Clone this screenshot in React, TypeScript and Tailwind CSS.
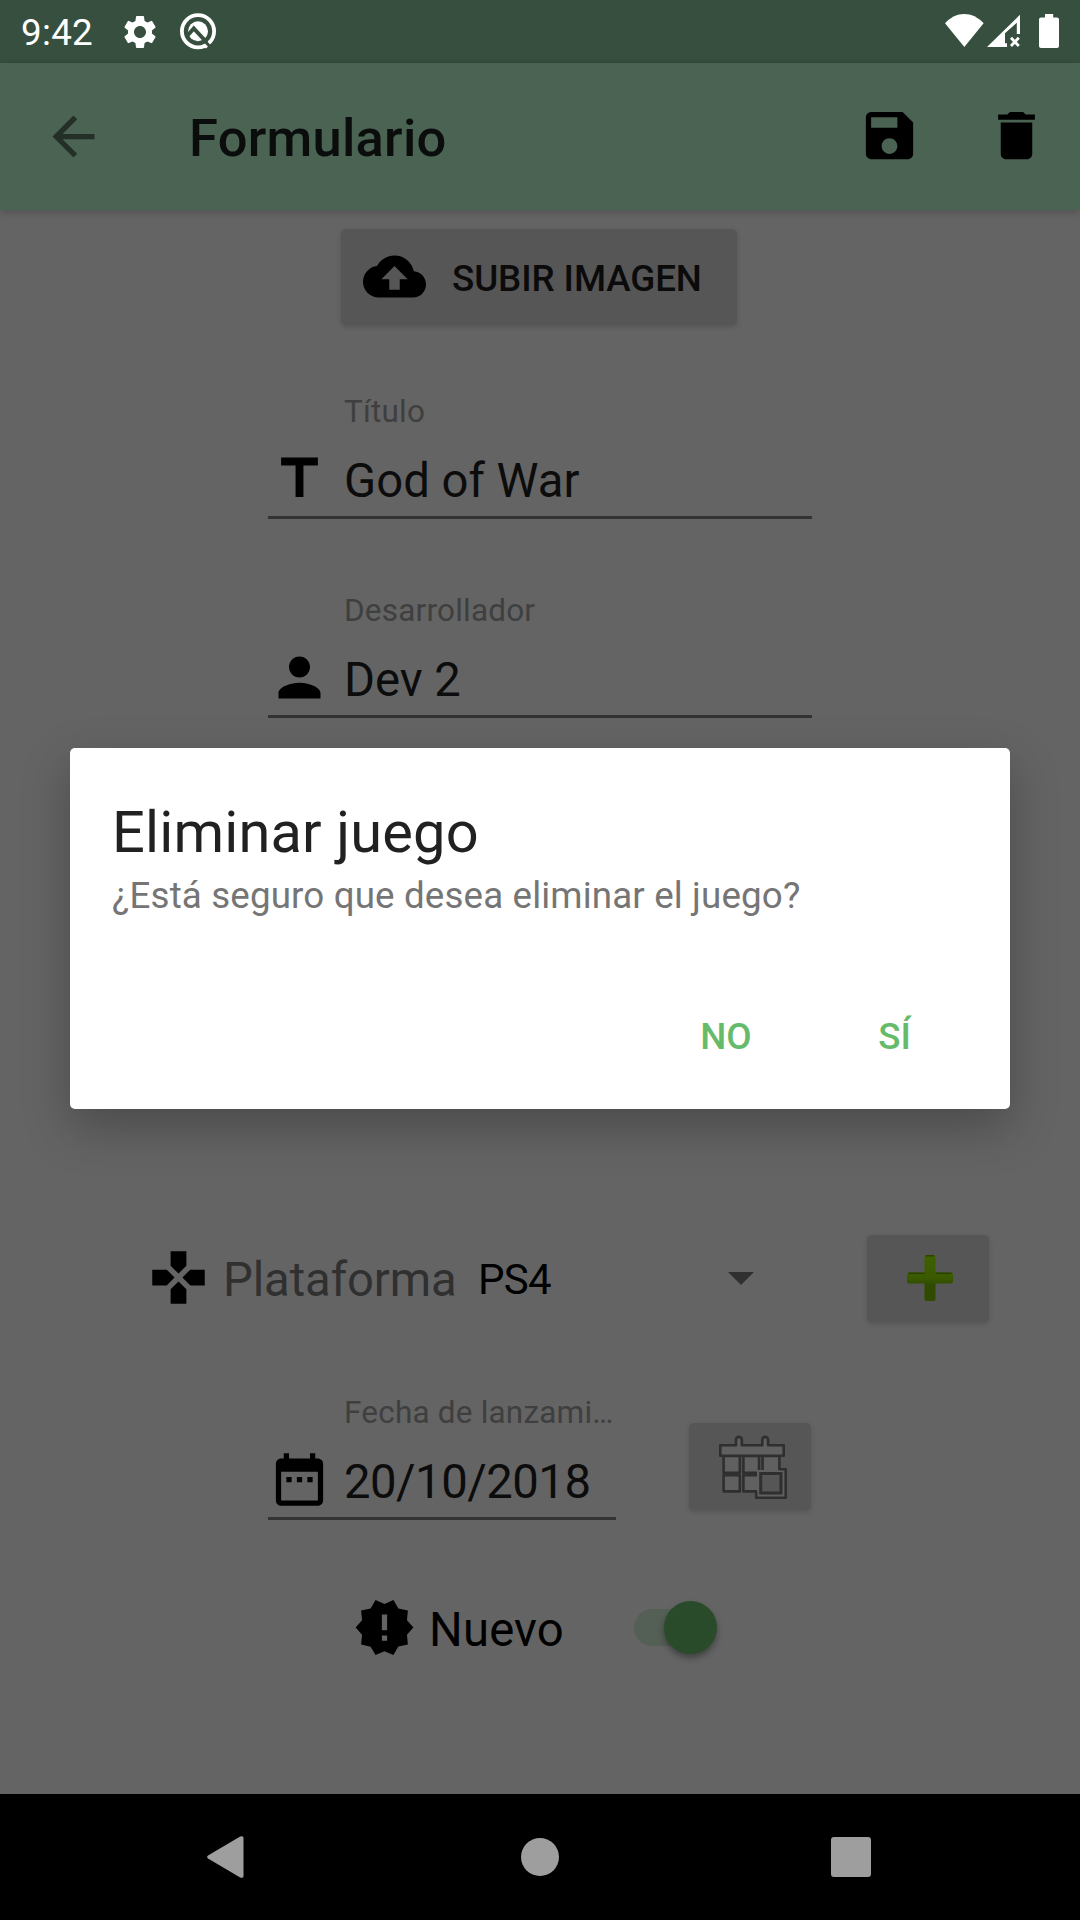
import type { ReactNode } from "react";
import {
  MdSettings,
  MdArrowBack,
  MdSave,
  MdDelete,
  MdCloudUpload,
  MdTitle,
  MdPerson,
  MdGamepad,
  MdDateRange,
  MdNewReleases,
} from "react-icons/md";

function StatusBar() {
  return (
    <div className="flex h-[63px] items-start bg-[#364f3e] pl-[21px] text-white">
      <span className="mt-[8px] w-[99px] text-[36.75px] leading-[50px] tracking-[0.3px]">9:42</span>
      <MdSettings className="mt-[12px] size-[40px]" />
      <svg className="mt-[13px] ml-[20px]" width="37" height="37" viewBox="0 0 37 37">
        <circle cx="18" cy="18.3" r="16.1" fill="none" stroke="#fff" strokeWidth="3.8" />
        <circle cx="18" cy="18.3" r="10" fill="#fff" />
        <path d="M7.5 22.5 13.8 15.4 31 34" fill="none" stroke="#364f3e" strokeWidth="4" />
        <path d="M24.8 34.2 30 28.8" fill="none" stroke="#fff" strokeWidth="3.4" />
        <path d="M24.5 27.5 32 36" fill="none" stroke="#364f3e" strokeWidth="3" />
      </svg>
      <div className="mt-[14px] ml-auto flex items-start pr-[21px]">
        <svg width="39" height="34" viewBox="0 0 39 34">
          <path d="M0 9.3C11-3.1 27.5-3.1 38.6 9.3L19.3 33z" fill="#fff" />
        </svg>
        <svg className="ml-[3px]" width="34" height="34" viewBox="0 0 34 34">
          <path d="M0 33 33 .7V20h-3.2V8.7L18 19.3v10h2V33z" fill="#fff" />
          <path d="M24 23.8 31.8 32M31.8 23.8 24 32" fill="none" stroke="#fff" strokeWidth="2.8" />
        </svg>
        <svg className="ml-[18px]" width="20" height="34" viewBox="0 0 20 34">
          <path d="M6 0h8.2v3.4H18a2 2 0 0 1 2 2V32a2 2 0 0 1-2 2H2a2 2 0 0 1-2-2V5.4a2 2 0 0 1 2-2h4z" fill="#fff" />
        </svg>
      </div>
    </div>
  );
}

function AppBar() {
  return (
    <header className="relative flex h-[147px] items-center bg-[#4a6352] pr-[32px] pl-[42px] shadow-[0_2px_8px_rgba(0,0,0,0.2)]">
      <MdArrowBack className="size-[63px] text-[#232f27]" />
      <h1 className="mt-[4px] ml-[84px] text-[52.5px] leading-[63px] font-medium tracking-[0.25px] text-[#0a0d0b]">
        Formulario
      </h1>
      <MdSave className="-mt-[2px] ml-auto size-[63px] text-black" />
      <MdDelete className="-mt-[2px] ml-[64px] size-[63px] text-black" />
    </header>
  );
}

function Field({
  label,
  value,
  icon,
  width,
  valueTracking = "",
}: {
  label: string;
  value: string;
  icon: ReactNode;
  width: string;
  valueTracking?: string;
}) {
  return (
    <div className={`${width} h-[127px] border-b-[3px] border-[#333333] pt-px`}>
      <div className="ml-[76px] text-[31.5px] leading-[38px] tracking-[0.2px] whitespace-nowrap text-[#3f3f3f]">
        {label}
      </div>
      <div className="mt-[16px] flex">
        {icon}
        <span
          className={`ml-[13px] pt-[3px] text-[47.25px] leading-[63px] whitespace-nowrap text-[#0c0c0c] ${valueTracking}`}
        >
          {value}
        </span>
      </div>
    </div>
  );
}

function RaisedButton({ children, className }: { children: ReactNode; className: string }) {
  return (
    <button className={`flex items-center rounded-[5px] bg-[#565656] shadow-[0_2px_5px_rgba(0,0,0,0.15)] ${className}`}>
      {children}
    </button>
  );
}

function PlusIcon() {
  return (
    <svg width="46" height="46" viewBox="0 0 46 46">
      <defs>
        <linearGradient id="plus" x1="0" y1="0" x2="0" y2="1">
          <stop offset="0" stopColor="#3e6100" />
          <stop offset="0.5" stopColor="#3a5a00" />
          <stop offset="0.65" stopColor="#2f4a00" />
          <stop offset="1" stopColor="#304c00" />
        </linearGradient>
      </defs>
      <path
        d="M19.500 0h7a2 2 0 0 1 2 2v15.500H44a2 2 0 0 1 2 2v7a2 2 0 0 1-2 2H28.500V44a2 2 0 0 1-2 2h-7a2 2 0 0 1-2-2V28.500H2a2 2 0 0 1-2-2v-7a2 2 0 0 1 2-2H17.500V2a2 2 0 0 1 2-2z"
        fill="url(#plus)"
      />
      <path d="M19 .8h8M1.500 18.300h16M28.500 18.300h16" stroke="#2a4200" strokeWidth="1.500" />
    </svg>
  );
}

function MonthIcon() {
  return (
    <svg width="70" height="66" viewBox="0 0 70 66" fill="#606060" stroke="#2f2f2f" strokeWidth="2.6" strokeLinejoin="round">
      <path d="M5.600 22H21.800V38.900H5.600zM25.400 22H41V38.900H25.400zM44.600 22H61.400V38.900H44.600z" />
      <path d="M5.600 41.200H21.800V57.400H5.600zM25.400 41.200H41V57.400H25.400z" />
      <path d="M2.300 11.300H18V5.800a2.900 2.900 0 0 1 5.800 0V11.300H44.300V5.800a2.900 2.900 0 0 1 5.800 0V11.300H65.700V21.800H2.300z" />
      <path d="M39 36H67V63H39z" stroke="none" />
      <path d="M61.400 35.200H67.700V63.700H38.200V57.400" fill="none" />
      <path d="M42.700 39.500H63V59H42.700z" fill="#565656" strokeWidth="3" strokeLinejoin="miter" />
    </svg>
  );
}

function Dialog() {
  return (
    <div className="absolute top-[748px] left-[70px] h-[361px] w-[940px] rounded-[5px] bg-white px-[42px] shadow-[0_18px_48px_rgba(0,0,0,0.26)]">
      <h2 className="mt-[50px] text-[57.75px] leading-[68px] tracking-[0.17px] text-[#212121]">Eliminar juego</h2>
      <p className="mt-[6px] text-[36.75px] leading-[48px] tracking-[0.135px] whitespace-nowrap text-[#757575]">
        ¿Está seguro que desea eliminar el juego?
      </p>
      <div className="mt-[92px] flex justify-end gap-[28px] text-[36.75px] leading-[50px] font-medium text-[#66bb6a]">
        <button className="w-[134px] text-center">NO</button>
        <button className="w-[147px] text-center">SÍ</button>
      </div>
    </div>
  );
}

function NavBar() {
  return (
    <nav className="flex h-[126px] items-center bg-black text-[#9e9e9e]">
      <svg className="ml-[207px]" width="37" height="42" viewBox="0 0 37 42">
        <path d="M1 19.5 33.2.6Q36.5-.8 36.5 2v38q0 2.8-3.3 1.4L1 22.5Q-.8 21 1 19.5z" fill="currentColor" />
      </svg>
      <div className="ml-[277px] size-[38px] rounded-full bg-[#9e9e9e]" />
      <div className="ml-[272px] size-[40px] rounded-[3px] bg-[#9e9e9e]" />
    </nav>
  );
}

export default function App() {
  return (
    <div className="relative flex h-[1920px] w-[1080px] flex-col overflow-hidden bg-[#646464] font-['Roboto',sans-serif]">
      <StatusBar />
      <AppBar />
      <main className="flex flex-1 flex-col items-center">
        <RaisedButton className="mt-[19px] mr-[2px] h-[96px] w-[396px] pl-[22px]">
          <MdCloudUpload className="-mt-px size-[63px] text-black" />
          <span className="mt-[3px] ml-[26px] text-[36.75px] leading-[50px] font-medium tracking-[-0.1px] text-[#0b0b0b]">
            SUBIR IMAGEN
          </span>
        </RaisedButton>
        <div className="mt-[67px] flex flex-col gap-[72px]">
          <Field width="w-[544px]" label="Título" value="God of War" icon={<MdTitle className="size-[63px] text-black" />} />
          <Field width="w-[544px]" label="Desarrollador" value="Dev 2" icon={<MdPerson className="size-[63px] text-black" />} />
        </div>

        <div className="mt-[517px] flex h-[87px] items-center self-stretch pl-[147px]">
          <MdGamepad className="-mt-[2px] size-[63px] text-black" />
          <span className="mt-[3px] ml-[13px] w-[255px] text-[47.25px] leading-[60px] tracking-[-0.1px] text-[#303030]">
            Plataforma
          </span>
          <span className="mt-[2px] w-[250px] text-[42px] leading-[56px] tracking-[-0.7px] text-black">PS4</span>
          <svg width="26" height="13" viewBox="0 0 26 13">
            <path d="M0 0h26L13 13z" fill="#303030" />
          </svg>
          <RaisedButton className="ml-[113px] h-[87px] w-[122px] justify-center pb-[2px] pl-[4px]">
            <PlusIcon />
          </RaisedButton>
        </div>

        <div className="mt-[71px] flex w-[544px] justify-between">
          <Field
            width="w-[348px]"
            label="Fecha de lanzami…"
            value="20/10/2018"
            valueTracking="tracking-[-0.5px]"
            icon={<MdDateRange className="size-[63px] shrink-0 text-black" />}
          />
          <RaisedButton className="mt-[30px] mr-px h-[87px] w-[122px] justify-center pl-[6px]">
            <MonthIcon />
          </RaisedButton>
        </div>

        <div className="mt-[76px] flex h-[63px] items-center self-stretch pl-[353px]">
          <MdNewReleases className="size-[63px] text-black" />
          <span className="mt-[5px] ml-[13px] w-[205px] text-[47.25px] leading-[60px] tracking-[0.2px] text-black">
            Nuevo
          </span>
          <div className="flex h-[37px] w-[83px] items-center justify-end rounded-full bg-[#545f55]">
            <div className="size-[53px] shrink-0 rounded-full bg-[#294b2a] shadow-[0_4px_6px_rgba(0,0,0,0.35)]" />
          </div>
        </div>
      </main>
      <NavBar />
      <Dialog />
    </div>
  );
}
